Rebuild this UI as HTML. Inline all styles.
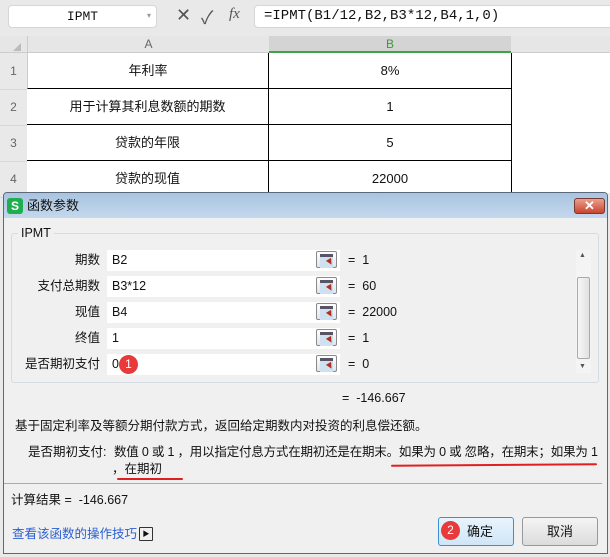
<!DOCTYPE html><html><head><meta charset="utf-8"><style>
*{margin:0;padding:0;box-sizing:border-box}
body{width:610px;height:557px;position:relative;overflow:hidden;background:#e9e9e9;font-family:"Liberation Sans","Noto Sans CJK SC",sans-serif;font-size:12px;color:#111}
.a{position:absolute}
.cell{position:absolute;background:#fff;border-right:1px solid #000;border-bottom:1px solid #000;text-align:center;line-height:35px;font-size:13px}
.rh{position:absolute;left:0;width:27px;text-align:center;color:#666;line-height:36px;font-size:12px;border-bottom:1px solid #d8d8d8}
.lbl{position:absolute;right:510px;font-size:12.5px;text-align:right;white-space:nowrap;line-height:21px;height:21px}
.inp{position:absolute;left:107px;width:233px;height:21px;background:#fff;line-height:21px;padding-left:5px;font-size:12.5px}
.btn{position:absolute;left:316px;width:21px;height:17px;border:1px solid #8a8a8a;border-radius:2px;background:linear-gradient(#fff,#dde6ee)}
.btn:before{content:"";position:absolute;left:3px;top:2px;width:13px;height:11px;background:#cfe0f0;border-top:3px solid #556}
.btn:after{content:"";position:absolute;left:10px;top:7px;width:0;height:0;border-left:3px solid transparent;border-right:3px solid transparent;border-top:6px solid #b03020;transform:rotate(-30deg)}
.eq{position:absolute;left:348px;font-size:12.5px;line-height:21px}
.t{line-height:16px;height:16px}
</style></head><body>
<div class="a" style="left:8px;top:5px;width:149px;height:23px;background:#fff;border:1px solid #d6d6d6;border-radius:4px;font-family:'Liberation Mono',monospace;font-size:13px;line-height:21px;text-align:center">IPMT<span style="position:absolute;right:5px;font-size:8px;color:#999">▾</span></div>
<div class="a" style="left:176px;top:5px;font-size:18px;color:#555">✕</div>
<div class="a" style="left:201px;top:4px;font-size:18px;color:#555">✓</div>
<div class="a" style="left:229px;top:6px;font-size:15px;color:#555;font-style:italic;font-family:'Liberation Serif',serif">fx</div>
<div class="a" style="left:254px;top:5px;width:360px;height:23px;background:#fff;border:1px solid #d6d6d6;border-radius:4px;font-family:'Liberation Mono',monospace;font-size:14px;line-height:21px;padding-left:9px">=IPMT(B1/12,B2,B3*12,B4,1,0)</div>
<div class="a" style="left:0;top:36px;width:610px;height:17px;background:#e6e6e6;border-bottom:1px solid #ccc"></div>
<div class="a" style="left:27px;top:36px;width:242px;height:17px;text-align:center;color:#666;line-height:17px;border-left:1px solid #ccc">A</div>
<div class="a" style="left:269px;top:36px;width:242px;height:17px;text-align:center;color:#3a9a3a;line-height:16px;background:#d4d4d4;border-bottom:2px solid #3fa14a">B</div>
<div class="a" style="left:13px;top:43px;width:0;height:0;border-left:8px solid transparent;border-bottom:8px solid #bbb"></div>
<div class="a" style="left:511px;top:53px;width:99px;height:140px;background:#fff"></div>
<div class="rh" style="top:53px">1</div><div class="rh" style="top:89px">2</div><div class="rh" style="top:125px">3</div><div class="rh" style="top:161px">4</div>
<div class="cell" style="left:27px;top:53px;width:242px;height:36px;border-left:1px solid #ccc">年利率</div>
<div class="cell" style="left:269px;top:53px;width:243px;height:36px">8%</div>
<div class="cell" style="left:27px;top:89px;width:242px;height:36px">用于计算其利息数额的期数</div>
<div class="cell" style="left:269px;top:89px;width:243px;height:36px">1</div>
<div class="cell" style="left:27px;top:125px;width:242px;height:36px">贷款的年限</div>
<div class="cell" style="left:269px;top:125px;width:243px;height:36px">5</div>
<div class="cell" style="left:27px;top:161px;width:242px;height:36px">贷款的现值</div>
<div class="cell" style="left:269px;top:161px;width:243px;height:36px">22000</div>
<!-- dialog -->
<div class="a" style="left:3px;top:192px;width:605px;height:362px;background:#f0f0f0;border:1px solid #5a6a7c;border-radius:4px 4px 0 0"></div>
<div class="a" style="left:4px;top:193px;width:603px;height:25px;background:linear-gradient(#a9c4e0,#c4d8ed);border-radius:3px 3px 0 0"></div>
<div class="a" style="left:7px;top:198px;width:16px;height:16px;background:#1fae4f;border-radius:3px;color:#fff;font-weight:bold;font-size:12px;text-align:center;line-height:16px">S</div>
<div class="a t" style="left:27px;top:198px;font-size:13px">函数参数</div>
<div class="a" style="left:574px;top:198px;width:31px;height:16px;background:linear-gradient(#e9a08f,#c8452d);border:1px solid #7a3a30;border-radius:3px;color:#fff;text-align:center;font-weight:bold;line-height:14px;font-size:13px">✕</div>
<div class="a" style="left:11px;top:233px;width:588px;height:150px;border:1px solid #d5dbe3;border-radius:3px"></div>
<div class="a t" style="left:18px;top:225px;background:#f0f0f0;padding:0 3px;font-size:12.5px">IPMT</div>
<div class="lbl" style="top:250px">期数</div><div class="inp" style="top:250px">B2</div><div class="btn" style="top:251px"></div><div class="eq" style="top:250px">=&nbsp; 1</div>
<div class="lbl" style="top:276px">支付总期数</div><div class="inp" style="top:276px">B3*12</div><div class="btn" style="top:277px"></div><div class="eq" style="top:276px">=&nbsp; 60</div>
<div class="lbl" style="top:302px">现值</div><div class="inp" style="top:302px">B4</div><div class="btn" style="top:303px"></div><div class="eq" style="top:302px">=&nbsp; 22000</div>
<div class="lbl" style="top:328px">终值</div><div class="inp" style="top:328px">1</div><div class="btn" style="top:329px"></div><div class="eq" style="top:328px">=&nbsp; 1</div>
<div class="lbl" style="top:354px">是否期初支付</div><div class="inp" style="top:354px">0</div><div class="btn" style="top:355px"></div><div class="eq" style="top:354px">=&nbsp; 0</div>
<div class="a" style="left:119px;top:355px;width:19px;height:19px;border-radius:50%;background:#e83a3a;color:#fff;text-align:center;line-height:19px;font-size:12px">1</div>
<div class="a" style="left:576px;top:250px;width:15px;height:123px;background:#f4f4f4"></div>
<div class="a" style="left:577px;top:277px;width:13px;height:82px;background:linear-gradient(90deg,#f6f6f6,#e2e2e2);border:1px solid #aaa;border-radius:2px"></div>
<div class="a" style="left:579px;top:252px;font-size:7px;color:#555">▲</div>
<div class="a" style="left:579px;top:363px;font-size:7px;color:#555">▼</div>
<div class="a t" style="left:342px;top:390px;font-size:12.5px">=&nbsp; -146.667</div>
<div class="a t" style="left:15px;top:418px;font-size:12.5px">基于固定利率及等额分期付款方式，返回给定期数内对投资的利息偿还额。</div>
<div class="a t" style="left:28px;top:444px;font-size:12.5px">是否期初支付:</div>
<div class="a t" style="left:114px;top:444px;font-size:12.5px;white-space:nowrap;letter-spacing:-0.2px">数值 0 或 1 ，用以指定付息方式在期初还是在期末。如果为 0 或 忽略，在期末；如果为 1</div>
<div class="a t" style="left:112px;top:461px;font-size:12.5px">，在期初</div>
<div class="a" style="left:391px;top:464px;width:206px;height:2px;background:#e02020;border-radius:1px;transform:rotate(-.4deg)"></div>
<div class="a" style="left:117px;top:478px;width:66px;height:2px;background:#e02020;border-radius:1px"></div>
<div class="a" style="left:4px;top:483px;width:598px;height:1px;background:#aaa"></div>
<div class="a t" style="left:11px;top:492px;font-size:12.5px">计算结果 =&nbsp; -146.667</div>
<div class="a t" style="left:12px;top:526px;font-size:12.5px;color:#2a5fd0">查看该函数的操作技巧</div>
<div class="a" style="left:139px;top:527px;width:14px;height:14px;border:1px solid #333;border-radius:1px;font-size:7px;text-align:center;line-height:13px">▶</div>
<div class="a" style="left:438px;top:517px;width:76px;height:29px;border:1px solid #3c8fd6;border-radius:3px;background:linear-gradient(#e9f4fd,#cfe6f8);text-align:center;line-height:27px;font-size:13px;padding-left:8px">确定</div>
<div class="a" style="left:441px;top:521px;width:19px;height:19px;border-radius:50%;background:#e83a3a;color:#fff;text-align:center;line-height:19px;font-size:12px">2</div>
<div class="a" style="left:522px;top:517px;width:76px;height:29px;border:1px solid #999;border-radius:3px;background:linear-gradient(#f4f4f4,#dcdcdc);text-align:center;line-height:27px;font-size:13px">取消</div>
</body></html>
